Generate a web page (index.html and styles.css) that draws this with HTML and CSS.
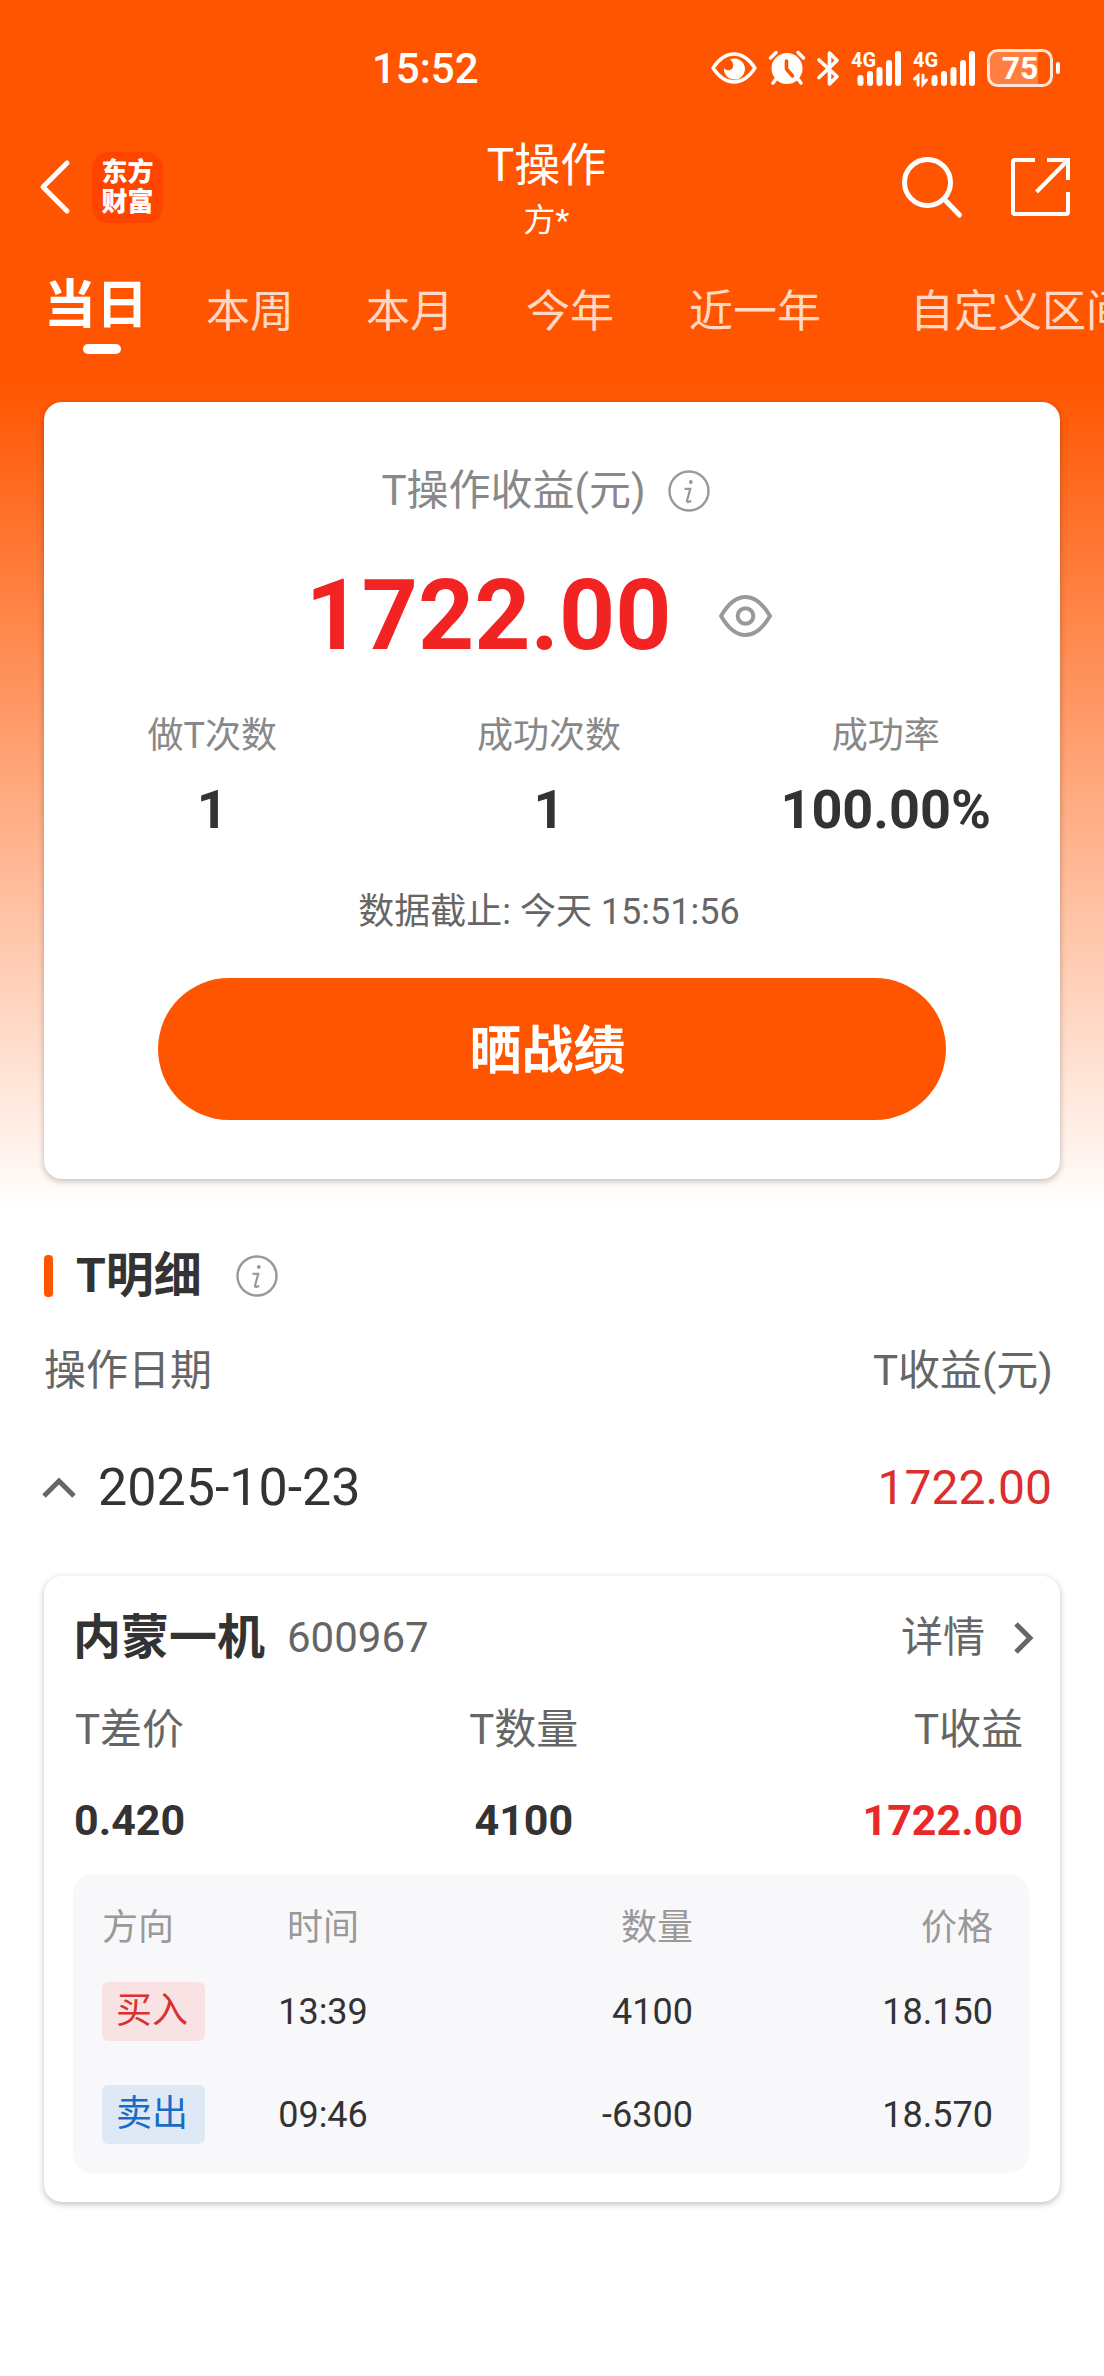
FILE: index.html
```html
<!DOCTYPE html>
<html lang="zh-CN">
<head>
<meta charset="utf-8">
<meta name="viewport" content="width=device-width, initial-scale=1">
<title>T操作</title>
<link rel="stylesheet" href="styles.css">
</head>
<body>
<div class="page">
  <div class="status">
    <span class="status-time">15:52</span>
    <div class="status-icons">
      <svg width="46" height="32" viewBox="0 0 46 32" aria-hidden="true">
        <path d="M2 16C8 7 15 2 23 2s15 5 21 14c-6 9-13 14-21 14S8 25 2 16Z" fill="none" stroke="#fff" stroke-width="3.4" stroke-linejoin="round"/>
        <path d="M19 7.500a10.500 10.500 0 1 1-6 8.500c2 3.500 8 3 9-1 .8-3-.5-6-3-7.500Z" fill="#fff"/>
      </svg>
      <svg width="36" height="34" viewBox="0 0 36 34" aria-hidden="true">
        <circle cx="18" cy="17.500" r="15.500" fill="#fff"/>
        <path d="M1.500 7 7 1.500M34.500 7 29 1.500M7 28l-3 4M29 28l3 4" stroke="#fff" stroke-width="3.500" stroke-linecap="round"/>
        <path d="M17.500 10v8l6 7" fill="none" stroke="#ff5500" stroke-width="3.600" stroke-linecap="round" stroke-linejoin="round"/>
      </svg>
      <svg width="22" height="35" viewBox="0 0 22 35" aria-hidden="true">
        <path d="M2 9 20 25.500 12.500 33V2L20 9.500 2 26.500" fill="none" stroke="#fff" stroke-width="3.600" stroke-linecap="round" stroke-linejoin="round"/>
      </svg>
      <svg class="signal" width="50" height="35" viewBox="0 0 50 35" aria-label="4G">
        <text x="0" y="16">4G</text>
        <path d="M9.500 27v5M19 23v9M28.500 19v13M38 12v20M47 3v29"/>
      </svg>
      <svg class="signal" width="62" height="35" viewBox="0 0 62 35" aria-label="4G">
        <text x="0" y="16">4G</text>
        <path d="M21.500 27v5M31 23v9M40.500 19v13M50 12v20M59 3v29"/>
        <path class="thin" d="M1.500 28 5 25v9M10 24v9l3.500-4"/>
      </svg>
      <svg class="battery" width="73" height="38" viewBox="0 0 73 38" aria-label="75%">
        <path d="M9 3h42v32H9q-6 0-6-6V9q0-6 6-6Z" fill="#fff" fill-opacity=".25"/>
        <rect x="1.500" y="1.500" width="63" height="35" rx="9" fill="none" stroke="#fff" stroke-opacity=".85" stroke-width="3"/>
        <rect x="69" y="13" width="4" height="12" rx="2" fill="#fff"/>
        <text x="33" y="30" text-anchor="middle">75</text>
      </svg>
    </div>
  </div>

  <header class="header">
    <div class="header-left">
      <button class="icon-btn back" type="button" aria-label="返回">
        <svg width="30" height="54" viewBox="0 0 30 54"><path d="M27 3 3 27l24 24" fill="none" stroke="#fff" stroke-width="5" stroke-linecap="round" stroke-linejoin="round"/></svg>
      </button>
      <div class="logo"><span>东方</span><span>财富</span></div>
    </div>
    <div class="header-title">
      <h1>T操作</h1>
      <p>方*</p>
    </div>
    <div class="header-right">
      <button class="icon-btn" type="button" aria-label="搜索">
        <svg width="60" height="60" viewBox="0 0 60 60"><g fill="none" stroke="#fff" stroke-width="5" stroke-linecap="round"><circle cx="25.500" cy="25.500" r="23"/><path d="m42 42 15.500 16"/></g></svg>
      </button>
      <button class="icon-btn" type="button" aria-label="分享">
        <svg width="59" height="58" viewBox="0 0 59 58"><path d="M24 2H4Q2 2 2 4v50q0 2 2 2h51q2 0 2-2V34M36 2h21v20M56 3 25.500 34" fill="none" stroke="#fff" stroke-width="4"/></svg>
      </button>
    </div>
  </header>

  <nav class="tabs">
    <a class="tab active" href="#day">当日</a>
    <a class="tab" href="#week">本周</a>
    <a class="tab" href="#month">本月</a>
    <a class="tab" href="#year">今年</a>
    <a class="tab" href="#last-year">近一年</a>
    <a class="tab" href="#custom">自定义区间</a>
  </nav>

  <main class="content">
    <section class="card summary">
      <div class="summary-title">
        <h2>T操作收益(元)</h2>
        <button class="icon-btn" type="button" aria-label="说明">
          <svg width="42" height="42" viewBox="0 0 42 42"><circle cx="21" cy="21" r="19.500" fill="none" stroke="#999" stroke-width="2.400"/><circle cx="22.800" cy="12" r="2" fill="#999"/><path d="M16.500 18.800h5.800l-3.200 11.500q-.5 1.700 1.200 1.500l3-.8" fill="none" stroke="#999" stroke-width="2.200"/></svg>
        </button>
      </div>
      <div class="summary-amount">
        <strong>1722.00</strong>
        <button class="icon-btn" type="button" aria-label="隐藏金额">
          <svg width="53" height="42" viewBox="0 0 53 42"><path d="M2 21C9 9 17 2 26.500 2S44 9 51 21C44 33 36 40 26.500 40S9 33 2 21Z" fill="none" stroke="#999" stroke-width="4" stroke-linejoin="round"/><circle cx="26.500" cy="21" r="7.800" fill="none" stroke="#999" stroke-width="4"/></svg>
        </button>
      </div>
      <dl class="stats">
        <div><dt>做T次数</dt><dd>1</dd></div>
        <div><dt>成功次数</dt><dd>1</dd></div>
        <div><dt>成功率</dt><dd>100.00%</dd></div>
      </dl>
      <p class="deadline">数据截止: 今天 15:51:56</p>
      <button class="share-btn" type="button">晒战绩</button>
    </section>

    <section class="detail">
      <div class="section-title">
        <h2>T明细</h2>
        <button class="icon-btn" type="button" aria-label="说明">
          <svg width="42" height="42" viewBox="0 0 42 42"><circle cx="21" cy="21" r="19.500" fill="none" stroke="#999" stroke-width="2.400"/><circle cx="22.800" cy="12" r="2" fill="#999"/><path d="M16.500 18.800h5.800l-3.200 11.500q-.5 1.700 1.200 1.500l3-.8" fill="none" stroke="#999" stroke-width="2.200"/></svg>
        </button>
      </div>
      <div class="list-head"><span>操作日期</span><span>T收益(元)</span></div>
      <button class="day-row" type="button" aria-expanded="true">
        <svg width="32" height="22" viewBox="0 0 32 22"><path d="M0 20 15 5l15 15" fill="none" stroke="#666" stroke-width="5"/></svg>
        <span class="day-date">2025-10-23</span>
        <span class="day-amount">1722.00</span>
      </button>

      <article class="card trade">
        <div class="trade-head">
          <h3>内蒙一机</h3>
          <span class="trade-code">600967</span>
          <a class="trade-more" href="#detail">详情
            <svg width="20" height="32" viewBox="0 0 20 32"><path d="m3 2 14 14L3 30" fill="none" stroke="#666" stroke-width="5"/></svg>
          </a>
        </div>
        <dl class="trade-stats">
          <div><dt>T差价</dt><dd>0.420</dd></div>
          <div><dt>T数量</dt><dd>4100</dd></div>
          <div><dt>T收益</dt><dd class="up">1722.00</dd></div>
        </dl>
        <div class="deals">
          <table>
            <colgroup><col class="col-side"><col class="col-time"><col><col class="col-price"></colgroup>
            <thead>
              <tr><th>方向</th><th>时间</th><th>数量</th><th>价格</th></tr>
            </thead>
            <tbody>
              <tr><td><span class="tag buy">买入</span></td><td>13:39</td><td>4100</td><td>18.150</td></tr>
              <tr><td><span class="tag sell">卖出</span></td><td>09:46</td><td>-6300</td><td>18.570</td></tr>
            </tbody>
          </table>
        </div>
      </article>
    </section>
  </main>
</div>
</body>
</html>
```
FILE: styles.css
```css
* {
  box-sizing: border-box;
  margin: 0;
  padding: 0;
}

body {
  background: #fff;
  color: #333;
  font-family: Roboto, "Noto Sans CJK SC", sans-serif;
  font-size: 36px;
}

button {
  border: 0;
  background: none;
  color: inherit;
  font: inherit;
  cursor: pointer;
}

a {
  color: inherit;
  text-decoration: none;
}

svg {
  display: block;
  flex: none;
  overflow: visible;
}

.page {
  min-height: 100vh;
  overflow: hidden;
  background: linear-gradient(#ff5500 380px, #ffffff 1210px);
}

.icon-btn {
  display: flex;
}

/* Status bar */
.status {
  display: flex;
  align-items: center;
  justify-content: space-between;
  height: 132px;
  padding: 4px 44px 0 372px;
  color: #fff;
}

.status-time {
  font-size: 42px;
  font-weight: 500;
}

.status-icons {
  display: flex;
  align-items: center;
  gap: 12px;
}

.signal text {
  fill: #fff;
  font-size: 20px;
  font-weight: 700;
}

.signal path {
  fill: none;
  stroke: #fff;
  stroke-width: 6px;
  stroke-linecap: round;
}

.signal .thin {
  stroke-width: 3px;
}

.battery text {
  fill: #fff;
  font-size: 32px;
  font-weight: 700;
}

/* Header */
.header {
  display: grid;
  grid-template-columns: 1fr auto 1fr;
  align-items: center;
  padding: 0 34px 0 23px;
  color: #fff;
}

.header-left,
.header-right {
  display: flex;
  align-items: center;
}

.header-left {
  gap: 22px;
}

.header-right {
  justify-content: flex-end;
  gap: 49px;
}

.back {
  padding-left: 17px;
}

.logo {
  display: flex;
  flex-direction: column;
  align-items: center;
  justify-content: center;
  width: 71px;
  height: 71px;
  border-radius: 16px;
  background: #ff4400;
  font-size: 26px;
  font-weight: 900;
  line-height: 30px;
}

.header-title {
  text-align: center;
}

.header-title h1 {
  font-size: 46px;
  font-weight: 400;
  line-height: 66px;
}

.header-title p {
  font-size: 32px;
  line-height: 44px;
}

/* Period tabs */
.tabs {
  display: grid;
  grid-template-columns: 148px 160px 160px 160px 210px 320px;
  align-items: start;
  height: 160px;
  padding: 29px 0 0 22px;
  overflow: hidden;
}

.tab {
  color: #ffd9c4;
  font-size: 44px;
  line-height: 82px;
  text-align: center;
  white-space: nowrap;
}

.tab.active {
  color: #fff;
  font-size: 52px;
  font-weight: 700;
  line-height: 70px;
}

.tab.active::after {
  content: "";
  display: block;
  width: 38px;
  height: 10px;
  margin: 3px auto 0 61px;
  border-radius: 5px;
  background: #fff;
}

/* Cards */
.content {
  padding: 0 44px 170px;
}

.card {
  border-radius: 18px;
  background: #fff;
  box-shadow: 0 2px 6px rgba(0, 0, 0, 0.26);
}

.summary {
  padding: 56px 0 59px;
}

.summary-title,
.summary-amount {
  display: flex;
  align-items: center;
  justify-content: center;
}

.summary-title {
  gap: 22px;
  padding-right: 13px;
  color: #888;
  line-height: 66px;
}

.summary-title h2 {
  font-size: 42px;
  font-weight: 400;
}

.summary-amount {
  gap: 48px;
  padding-right: 26px;
  line-height: 120px;
  margin: 32px 0 31px;
}

.summary-amount strong {
  color: #f12323;
  font-size: 98px;
}

.stats {
  display: grid;
  grid-template-columns: repeat(3, 1fr);
  padding-right: 6px;
  text-align: center;
}

.stats dt {
  color: #888;
  font-size: 36px;
  line-height: 58px;
}

.stats dd {
  margin-top: 10px;
  font-size: 54px;
  font-weight: 700;
  line-height: 70px;
}

.deadline {
  margin-top: 39px;
  padding-right: 6px;
  color: #666;
  line-height: 56px;
  text-align: center;
}

.share-btn {
  display: block;
  width: calc(100% - 228px);
  height: 142px;
  margin: 38px auto 0;
  padding: 0 9px 6px 0;
  border-radius: 71px;
  background: #ff5500;
  color: #fff;
  font-size: 52px;
  font-weight: 700;
}

/* Detail list */
.section-title {
  display: flex;
  align-items: center;
  gap: 34px;
  margin-top: 61px;
  line-height: 72px;
}

.section-title::before {
  content: "";
  width: 9px;
  height: 42px;
  margin-right: -11px;
  border-radius: 4px;
  background: #ff5500;
}

.section-title h2 {
  font-size: 48px;
}

.list-head {
  display: flex;
  justify-content: space-between;
  margin-top: 27px;
  padding-right: 7px;
  color: #666;
  font-size: 42px;
  line-height: 64px;
}

.day-row {
  display: flex;
  align-items: center;
  gap: 22px;
  width: 100%;
  height: 120px;
  margin: 24px 0 29px;
  padding-right: 8px;
}

.day-date {
  font-size: 52px;
}

.day-amount {
  margin-left: auto;
  color: #dc2e2e;
  font-size: 48px;
}

.trade {
  padding: 30px 31px 29px 29px;
}

.trade-head {
  display: flex;
  align-items: center;
  gap: 22px;
  line-height: 64px;
}

.trade-head h3 {
  font-size: 48px;
}

.trade-code,
.trade-more {
  color: #666;
  font-size: 42px;
}

.trade-more {
  display: flex;
  align-items: center;
  gap: 28px;
  margin-left: auto;
  margin-right: -4px;
}

.trade-stats {
  display: flex;
  justify-content: space-between;
  margin-top: 28px;
  padding: 0 6px 0 1px;
  text-align: center;
}

.trade-stats dt {
  color: #666;
  font-size: 42px;
  line-height: 64px;
}

.trade-stats dd {
  margin-top: 28px;
  font-size: 43px;
  font-weight: 700;
  line-height: 60px;
}

.trade-stats > :last-child {
  text-align: right;
}

.trade-stats .up {
  color: #e92828;
}

.deals {
  margin-top: 24px;
  padding: 22px 36px 7px 29px;
  border-radius: 20px;
  background: #f8f8fb;
}

.deals table {
  width: 100%;
  table-layout: fixed;
  border-collapse: collapse;
  line-height: 50px;
}

.col-side {
  width: 140px;
}

.col-time {
  width: 162px;
}

.col-price {
  width: 300px;
}

.deals th {
  height: 64px;
  color: #999;
  font-weight: 400;
}

.deals td {
  height: 103px;
}

.deals th,
.deals td {
  text-align: right;
  vertical-align: middle;
}

.deals tr > :first-child {
  text-align: left;
}

.deals tr > :nth-child(2) {
  text-align: center;
}

.tag {
  display: block;
  width: 103px;
  padding: 4px 14px 5px;
  border-radius: 6px;
  white-space: nowrap;
}

.buy {
  background: #f8e2e3;
  color: #d93030;
}

.sell {
  background: #dfe9f5;
  color: #1a6bc4;
}
```
